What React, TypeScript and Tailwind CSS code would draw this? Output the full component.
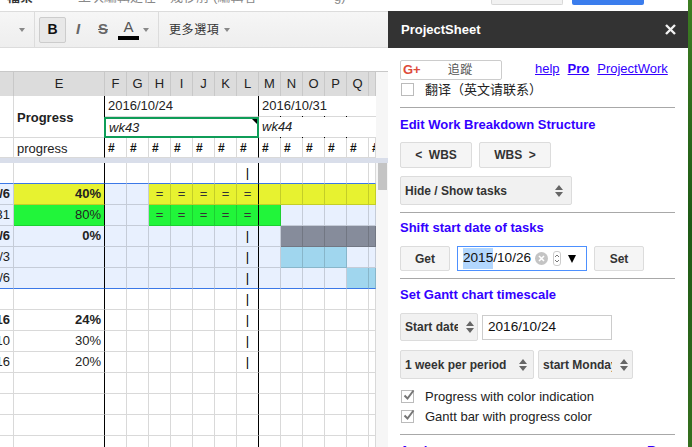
const cols = ["w-[14px]", "w-[91px]", ...Array(12).fill("w-[22px]"), "w-[7px]"] as string[];
const letters = ["", "E", "F", "G", "H", "I", "J", "K", "L", "M", "N", "O", "P", "Q", ""];

const YELLOW = "bg-[#e7f230]";
const GREEN = "bg-[#21f53a]";
const LIGHT = "bg-[#e8f0fe]";
const GRAY = "bg-[#868c9b]";
const BLUE = "bg-[#a0d6ee]";

// fills run over the 13 columns F..Q + the cut off one
function fills(...parts: [number, string][]) {
  const out: string[] = [];
  parts.forEach(([n, c]) => {
    for (let i = 0; i < n; i++) out.push(c);
  });
  return out;
}

interface RowProps {
  a?: string;
  e?: string;
  bold?: boolean;
  eBg?: string;
  aBg?: string;
  bars?: string[];
  eq?: boolean;
  tick?: boolean;
  blueBottom?: boolean;
}

function Row({ a, e, bold, eBg, aBg, bars, eq, tick, blueBottom }: RowProps) {
  const line = blueBottom ? "border-b-[#3b78e7]" : "border-b-black/15";
  const weight = bold ? "font-bold" : "";
  return (
    <div className="flex h-[21px]">
      <div className={`${cols[0]} ${aBg ?? ""} ${line} ${weight} flex shrink-0 items-center justify-end overflow-hidden whitespace-nowrap border-r border-b border-r-black/15 pr-[3px] text-[13px] text-[#222]`}>
        {a}
      </div>
      <div className={`${cols[1]} ${eBg ?? ""} ${line} ${weight} flex shrink-0 items-center justify-end border-r border-b border-r-black pr-[3px] text-[13px] text-[#222]`}>
        {e}
      </div>
      {cols.slice(2).map((w, i) => (
        <div
          key={i}
          className={`${w} ${bars?.[i] ?? ""} ${line} ${i === 6 ? "border-r-black" : "border-r-black/15"} flex shrink-0 items-center justify-center overflow-hidden border-r border-b text-[13px] ${eq ? "text-[#333]" : "text-black"}`}
        >
          {eq && i >= 2 && i <= 6 ? "=" : tick && i === 6 ? "|" : ""}
        </div>
      ))}
    </div>
  );
}

function Sheet() {
  const tops = [21, 43, 65, 87];
  return (
    <div className="w-[376px] shrink-0">
      <div className="flex h-[24px] bg-[#dcdcdc]">
        {cols.map((w, i) => (
          <div key={i} className={`${w} flex shrink-0 items-center justify-center border-r border-[#c8c8c8] text-[13px] text-[#222]`}>
            {letters[i]}
          </div>
        ))}
      </div>

      <div className="flex h-[42px] text-[13px] text-[#222]">
        <div className="w-[14px] shrink-0 border-r border-b border-black/15" />
        <div className="flex w-[91px] shrink-0 items-center border-r border-b border-r-black border-b-black/15 pt-[2px] pl-[3px] font-bold">Progress</div>
        <div className="flex w-[271px] shrink-0 flex-col">
          <div className="flex h-[21px]">
            <div className="flex w-[154px] items-center border-r border-b border-r-black border-b-black/15 pl-[3px]">2016/10/24</div>
            <div className="flex w-[117px] items-center border-b border-black/15 pl-[3px]">2016/10/31</div>
          </div>
          <div className="flex h-[21px]">
            <div className="relative flex w-[155px] -ml-px items-center border-2 border-[#0f9d58] pl-[3px] italic">
              wk43
              <span className="absolute top-0 right-0 border-t-[5px] border-l-[5px] border-t-black border-l-transparent" />
            </div>
            <div className="relative flex w-[117px] items-center border-b border-black/15 pl-[3px] italic">
              wk44
              {tops.map((x) => (
                <span key={x} className="absolute -top-px h-px w-px bg-black" style={{ left: x }} />
              ))}
              {tops.map((x) => (
                <span key={x} className="absolute -bottom-px h-px w-px bg-black" style={{ left: x }} />
              ))}
            </div>
          </div>
        </div>
      </div>

      <div className="flex h-[20px]">
        <div className={`${cols[0]} shrink-0 border-r border-b border-black/15`} />
        <div className={`${cols[1]} flex shrink-0 items-center border-r border-b border-r-black border-b-black/15 pt-[2px] pl-[3px] text-[13px] text-[#222]`}>progress</div>
        {cols.slice(2).map((w, i) => (
          <div key={i} className={`${w} ${i === 6 ? "border-r-black" : "border-r-black/15"} flex shrink-0 items-center overflow-hidden border-r border-b border-b-black/15 pl-[3px] text-[12px] font-bold text-[#111]`}>
            #
          </div>
        ))}
      </div>

      <div className="h-[5px] bg-[#d9deea]" />

      <Row tick blueBottom />
      <Row a="10/6" e="40%" bold eBg={YELLOW} aBg={LIGHT} bars={fills([2, LIGHT], [11, YELLOW])} eq />
      <Row a="10/31" e="80%" eBg={GREEN} aBg={LIGHT} bars={fills([2, LIGHT], [6, GREEN], [5, LIGHT])} eq />
      <Row a="10/6" e="0%" bold eBg={LIGHT} aBg={LIGHT} bars={fills([8, LIGHT], [5, GRAY])} tick />
      <Row a="10/3" eBg={LIGHT} aBg={LIGHT} bars={fills([8, LIGHT], [3, BLUE], [2, LIGHT])} tick />
      <Row a="10/6" eBg={LIGHT} aBg={LIGHT} bars={fills([11, LIGHT], [2, BLUE])} tick blueBottom />
      <Row tick />
      <Row a="10/16" e="24%" bold tick />
      <Row a="10/10" e="30%" tick />
      <Row a="10/16" e="20%" tick />
      <Row />
      <Row />
      <Row />
      <Row />
    </div>
  );
}

function Caret({ className = "" }: { className?: string }) {
  return <span className={`inline-block border-x-[3px] border-t-[4px] border-x-transparent border-t-[#888] ${className}`} />;
}

function Toolbar() {
  return (
    <div className="flex h-[37px] items-center border-y border-[#dcdcdc] bg-linear-to-b from-[#f6f6f6] to-[#eeeeee]">
      <div className="flex h-full w-[35px] shrink-0 items-center justify-end border-r border-[#dcdcdc] pr-[9px]">
        <Caret />
      </div>
      <div className="ml-[4px] flex h-[26px] w-[27px] shrink-0 items-center justify-center rounded-[2px] border border-[#ccc] bg-[#e8e8e8] text-[14px] font-bold text-[#111]">B</div>
      <span className="ml-[5px] w-[14px] text-center text-[15px] font-bold text-[#666] italic">I</span>
      <span className="ml-[11px] w-[14px] text-center text-[15px] font-bold text-[#666] line-through">S</span>
      <div className="ml-[8px] flex w-[21px] flex-col items-center">
        <span className="text-[15px] leading-[15px] text-[#555]">A</span>
        <span className="mt-[2px] h-[4px] w-[21px] bg-black" />
      </div>
      <Caret className="ml-[4px]" />
      <div className="ml-[9px] h-full w-px bg-[#dcdcdc]" />
      <span className="ml-[10px] text-[12px] tracking-[0.6px] text-[#333]">更多選項</span>
      <Caret className="ml-[5px]" />
    </div>
  );
}

function Gutter() {
  return (
    <div className="flex w-[12px] shrink-0 flex-col bg-[#f6f6f6]">
      <div className="h-[86px]" />
      <div className="h-[5px] bg-[#d9deea]" />
      <div className="mx-auto h-[27px] w-[9px] bg-[#c4c4c4]" />
    </div>
  );
}

function UpDown() {
  return (
    <svg width="8" height="12" viewBox="0 0 8 12" className="shrink-0">
      <path d="M4 0L8 5H0z M4 12L0 7H8z" fill="#666" />
    </svg>
  );
}

function Btn({ label, className }: { label: string; className: string }) {
  return (
    <div className={`flex shrink-0 items-center justify-center whitespace-pre rounded-[2px] border border-[#dcdcdc] bg-[#f5f5f5] text-[12px] font-bold text-[#333] ${className}`}>
      {label}
    </div>
  );
}

function Sel({ label, className }: { label: string; className: string }) {
  return (
    <div className={`flex shrink-0 items-center gap-[8px] rounded-[2px] border border-[#dcdcdc] bg-[#f1f1f1] pl-[4px] text-[12px] font-bold text-[#333] ${className}`}>
      <span className="min-w-0 flex-1 overflow-hidden whitespace-nowrap">{label}</span>
      <UpDown />
    </div>
  );
}

function Check({ label, checked }: { label: string; checked?: boolean }) {
  return (
    <div className="flex h-[13px] items-center text-[13px] text-[#222]">
      <div className="relative ml-px h-[13px] w-[13px] shrink-0 border border-[#bbb] bg-white">
        {checked && (
          <svg width="14" height="14" viewBox="0 0 14 14" className="absolute -top-[3px] left-0">
            <path d="M2.5 7.5L5.5 10.5L11.5 2.5" fill="none" stroke="#777" strokeWidth="2" />
          </svg>
        )}
      </div>
      <span className="ml-[11px] whitespace-nowrap">{label}</span>
    </div>
  );
}

function Heading({ children, className = "" }: { children: React.ReactNode; className?: string }) {
  return <div className={`text-[13px] leading-[15px] font-bold text-[#3300ff] ${className}`}>{children}</div>;
}

function Rule({ className }: { className: string }) {
  return <div className={`h-px w-[275px] bg-[#a8a8a8] ${className}`} />;
}

function Panel() {
  return (
    <div className="flex w-[300px] shrink-0 flex-col overflow-hidden bg-white">
      <div className="flex h-[11px] shrink-0 gap-[9px] pl-[103px]">
        <div className="h-[5px] w-[72px] rounded-b-[2px] border border-t-0 border-[#d8d8d8] bg-[#f2f2f2]" />
        <div className="h-[5px] w-[72px] rounded-b-[2px] bg-[#3b7ded]" />
      </div>
      <div className="flex h-[37px] shrink-0 items-center justify-between bg-[#333] pr-[12px] pl-[13px]">
        <span className="text-[13px] font-bold text-white">ProjectSheet</span>
        <svg width="11" height="11" viewBox="0 0 11 11">
          <path d="M1 1L10 10M10 1L1 10" stroke="#f2f2f2" strokeWidth="2.4" />
        </svg>
      </div>

      <div className="flex flex-col pl-[12px]">
        <div className="mt-[12px] flex h-[20px] items-center">
          <div className="flex h-[20px] w-[102px] shrink-0 items-center rounded-[2px] border border-[#ccc] pl-[2px] text-[12px]">
            <span className="text-[13px] font-bold text-[#dd4b39]">G+</span>
            <span className="ml-[27px] tracking-[0.5px] text-[#555]">追蹤</span>
          </div>
          <a className="ml-[33px] pb-[2px] text-[13px] text-[#3300ff] underline">help</a>
          <a className="ml-[8px] pb-[2px] text-[13px] font-bold text-[#3300ff] underline">Pro</a>
          <a className="ml-[8px] pb-[2px] text-[13px] text-[#3300ff] underline">ProjectWork</a>
        </div>
        <div className="mt-[3px]">
          <Check label="翻译（英文请联系）" />
        </div>
        <Rule className="mt-[11px]" />
        <Heading className="mt-[9px]">Edit Work Breakdown Structure</Heading>
        <div className="mt-[10px] flex gap-[7px]">
          <Btn label="<  WBS" className="h-[26px] w-[72px]" />
          <Btn label="WBS  >" className="h-[26px] w-[72px]" />
        </div>
        <Sel label="Hide / Show tasks" className="mt-[8px] h-[29px] w-[172px] pr-[8px]" />
        <Rule className="mt-[7px]" />
        <Heading className="mt-[7px]">Shift start date of tasks</Heading>
        <div className="mt-[11px] flex gap-[7px]">
          <Btn label="Get" className="h-[25px] w-[50px]" />
          <div className="flex h-[25px] w-[130px] shrink-0 items-center border border-[#4d90fe] pl-[5px] text-[13.6px] text-[#111]">
            <span className="bg-[#b3d7fe]">2015</span>
            <span>/10/26</span>
            <span className="ml-[4px] flex h-[13px] w-[13px] items-center justify-center rounded-full bg-[#c4c4c4]">
              <svg width="7" height="7" viewBox="0 0 7 7">
                <path d="M1 1L6 6M6 1L1 6" stroke="#fff" strokeWidth="1.6" />
              </svg>
            </span>
            <span className="ml-[5px] flex h-[15px] w-[8px] items-center justify-center rounded-[3px] border border-[#ccc]">
              <svg width="4" height="9" viewBox="0 0 4 9">
                <path d="M0 3L2 1L4 3M0 6L2 8L4 6" fill="none" stroke="#555" strokeWidth="0.8" />
              </svg>
            </span>
            <span className="ml-[7px] border-x-[4px] border-t-[8px] border-x-transparent border-t-black" />
          </div>
          <Btn label="Set" className="h-[25px] w-[50px]" />
        </div>
        <Rule className="mt-[7px]" />
        <Heading className="mt-[8px]">Set Gantt chart timescale</Heading>
        <div className="mt-[11px] flex items-center gap-[4px]">
          <Sel label="Start date" className="h-[28px] w-[78px] pr-[3px]" />
          <div className="flex h-[25px] w-[130px] shrink-0 items-center border border-[#ccc] pl-[5px] text-[13.6px] text-[#111]">2016/10/24</div>
        </div>
        <div className="mt-[9px] flex gap-[4px]">
          <Sel label="1 week per period" className="h-[29px] w-[134px] pr-[6px]" />
          <Sel label="start Monday" className="h-[29px] w-[95px] pr-[4px]" />
        </div>
        <div className="mt-[11px]">
          <Check checked label="Progress with color indication" />
        </div>
        <div className="mt-[7px]">
          <Check checked label="Gantt bar with progress color" />
        </div>
        <Rule className="mt-[11px]" />
        <div className="mt-[8px] flex w-[275px] justify-between">
          <Heading>Assign</Heading>
          <Heading className="w-[28px]">Re</Heading>
        </div>
      </div>
    </div>
  );
}

export default function App() {
  return (
    <div className="flex h-[447px] w-[692px] overflow-hidden bg-white [font-family:'Liberation_Sans','Noto_Sans_CJK_SC',sans-serif]">
      <div className="flex w-[388px] shrink-0 flex-col overflow-hidden">
        <div className="h-[11px] shrink-0 overflow-hidden">
          <div className="-mt-[11px] whitespace-nowrap pl-[7px] text-[13px] leading-[15px] text-[#888] [font-family:'Liberation_Sans','Noto_Sans_CJK_TC',sans-serif]">
            <span className="font-bold text-[#333]">檔案</span>
            <span className="ml-[45px]">上次編輯是在</span>
            <span className="ml-[14px]">幾秒前</span>
            <span className="ml-[4px]">(編輯者</span>
            <span className="ml-[14px]">· · · · · · · · g)</span>
          </div>
        </div>
        <Toolbar />
        <div className="h-[24px] shrink-0 border-b border-[#c8c8c8] bg-white" />
        <div className="flex min-h-0 flex-1">
          <Sheet />
          <Gutter />
        </div>
      </div>
      <Panel />
      <div className="w-[4px] shrink-0 bg-linear-to-b from-[#3d7d22] via-[#1d5a16] to-[#356f1e]" />
    </div>
  );
}
